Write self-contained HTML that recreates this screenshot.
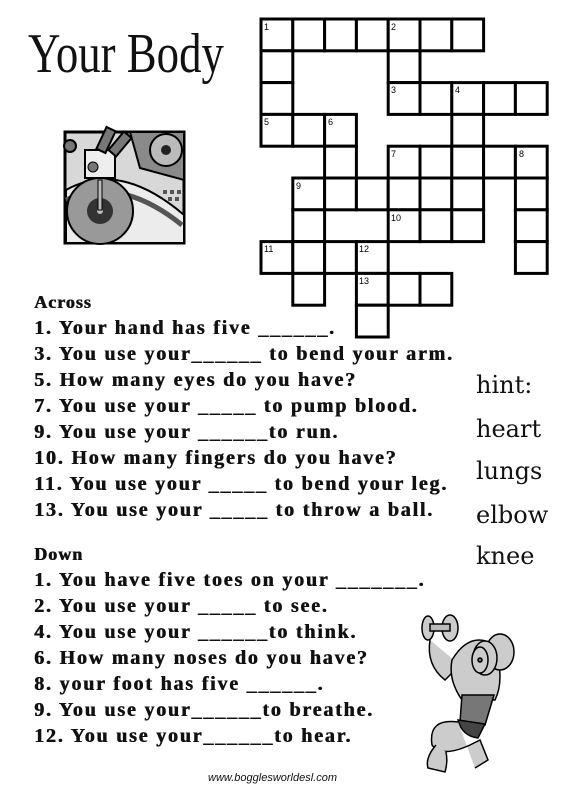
<!DOCTYPE html>
<html><head><meta charset="utf-8"><style>
html,body{margin:0;padding:0;background:#fff;}
body{width:576px;height:792px;position:relative;overflow:hidden;}
.t{position:absolute;left:34px;font-family:"Liberation Serif",serif;font-weight:bold;font-size:20px;letter-spacing:1.8px;white-space:nowrap;line-height:20px;color:#111;text-shadow:0.6px 0 0 #111;}
.h{position:absolute;font-family:"DejaVu Serif","Liberation Serif",serif;font-size:24px;color:#111;line-height:25px;}
</style></head><body>
<div style="position:absolute;left:28px;top:22px;font-family:'Liberation Serif',serif;font-size:56px;line-height:64px;color:#111;letter-spacing:0px;transform:scaleX(0.8);transform-origin:left top;">Your Body</div>

<svg style="position:absolute;left:0;top:0" width="576" height="792">
<g fill="#fff" stroke="#000" stroke-width="3">
<rect x="261" y="19" width="31.8" height="31.8"/><rect x="292.8" y="19" width="31.8" height="31.8"/><rect x="324.6" y="19" width="31.8" height="31.8"/><rect x="356.4" y="19" width="31.8" height="31.8"/><rect x="388.2" y="19" width="31.8" height="31.8"/><rect x="420" y="19" width="31.8" height="31.8"/><rect x="451.8" y="19" width="31.8" height="31.8"/>
<rect x="261" y="50.8" width="31.8" height="31.8"/><rect x="388.2" y="50.8" width="31.8" height="31.8"/>
<rect x="261" y="82.6" width="31.8" height="31.8"/><rect x="388.2" y="82.6" width="31.8" height="31.8"/><rect x="420" y="82.6" width="31.8" height="31.8"/><rect x="451.8" y="82.6" width="31.8" height="31.8"/><rect x="483.6" y="82.6" width="31.8" height="31.8"/><rect x="515.4" y="82.6" width="31.8" height="31.8"/>
<rect x="261" y="114.4" width="31.8" height="31.8"/><rect x="292.8" y="114.4" width="31.8" height="31.8"/><rect x="324.6" y="114.4" width="31.8" height="31.8"/><rect x="451.8" y="114.4" width="31.8" height="31.8"/>
<rect x="324.6" y="146.2" width="31.8" height="31.8"/><rect x="388.2" y="146.2" width="31.8" height="31.8"/><rect x="420" y="146.2" width="31.8" height="31.8"/><rect x="451.8" y="146.2" width="31.8" height="31.8"/><rect x="483.6" y="146.2" width="31.8" height="31.8"/><rect x="515.4" y="146.2" width="31.8" height="31.8"/>
<rect x="292.8" y="178" width="31.8" height="31.8"/><rect x="324.6" y="178" width="31.8" height="31.8"/><rect x="356.4" y="178" width="31.8" height="31.8"/><rect x="388.2" y="178" width="31.8" height="31.8"/><rect x="420" y="178" width="31.8" height="31.8"/><rect x="451.8" y="178" width="31.8" height="31.8"/><rect x="515.4" y="178" width="31.8" height="31.8"/>
<rect x="292.8" y="209.8" width="31.8" height="31.8"/><rect x="388.2" y="209.8" width="31.8" height="31.8"/><rect x="420" y="209.8" width="31.8" height="31.8"/><rect x="451.8" y="209.8" width="31.8" height="31.8"/><rect x="515.4" y="209.8" width="31.8" height="31.8"/>
<rect x="261" y="241.6" width="31.8" height="31.8"/><rect x="292.8" y="241.6" width="31.8" height="31.8"/><rect x="324.6" y="241.6" width="31.8" height="31.8"/><rect x="356.4" y="241.6" width="31.8" height="31.8"/><rect x="515.4" y="241.6" width="31.8" height="31.8"/>
<rect x="292.8" y="273.4" width="31.8" height="31.8"/><rect x="356.4" y="273.4" width="31.8" height="31.8"/><rect x="388.2" y="273.4" width="31.8" height="31.8"/><rect x="420" y="273.4" width="31.8" height="31.8"/>
<rect x="356.4" y="305.2" width="31.8" height="31.8"/>
</g>
<g font-family="Liberation Sans,sans-serif" font-size="9" fill="#000">
<text x="264" y="30">1</text><text x="391" y="30">2</text><text x="391" y="93">3</text><text x="455" y="93">4</text>
<text x="264" y="125">5</text><text x="328" y="125">6</text><text x="391" y="157">7</text><text x="519" y="157">8</text>
<text x="296" y="189">9</text><text x="391" y="221">10</text><text x="264" y="252">11</text><text x="359" y="252">12</text><text x="359" y="284">13</text>
</g>

<g>
<rect x="65" y="132" width="119" height="111" fill="#d8d8d8" stroke="#000" stroke-width="3"/>
<path d="M130 132 L184 132 L184 180 L140 168 Z" fill="#8a8a8a" stroke="#000" stroke-width="2"/>
<circle cx="166" cy="150" r="16" fill="#bbb" stroke="#000" stroke-width="2"/>
<circle cx="166" cy="150" r="5" fill="#222"/>
<path d="M66 190 Q120 160 184 215 L184 243 L66 243 Z" fill="#ececec" stroke="#000" stroke-width="2"/>
<path d="M66 200 Q120 175 182 225" fill="none" stroke="#555" stroke-width="5"/>
<circle cx="100" cy="211" r="33" fill="#999" stroke="#000" stroke-width="2"/>
<circle cx="100" cy="211" r="13" fill="#333"/>
<circle cx="100" cy="211" r="3" fill="#bbb"/>
<rect x="98" y="180" width="4" height="30" fill="#bbb" stroke="#000"/>
<rect x="85" y="150" width="30" height="28" fill="#eee" stroke="#000" stroke-width="2"/>
<rect x="101" y="128" width="10" height="24" fill="#777" stroke="#000" stroke-width="2" transform="rotate(25 106 140)"/>
<rect x="115" y="132" width="10" height="24" fill="#777" stroke="#000" stroke-width="2" transform="rotate(40 120 144)"/>
<circle cx="70" cy="146" r="6" fill="#777" stroke="#000" stroke-width="2"/>
<circle cx="93" cy="167" r="5" fill="#777" stroke="#000"/>
<g fill="#555"><rect x="163" y="190" width="4" height="4"/><rect x="170" y="190" width="4" height="4"/><rect x="177" y="190" width="4" height="4"/><rect x="168" y="197" width="4" height="4"/><rect x="175" y="197" width="4" height="4"/></g>
</g>

<g stroke="#000" stroke-width="1.5">
<path d="M430 640 Q426 665 445 680 L460 665" fill="#ccc"/>
<ellipse cx="428" cy="628" rx="6" ry="12" fill="#ccc"/>
<ellipse cx="450" cy="628" rx="8" ry="13" fill="#ccc"/>
<rect x="430" y="624" width="20" height="7" fill="#bbb"/>
<path d="M452 660 Q470 630 495 645 Q505 680 495 700 L462 700 Q448 680 452 660 Z" fill="#ccc"/>
<ellipse cx="500" cy="652" rx="14" ry="18" fill="#ccc"/>
<ellipse cx="485" cy="658" rx="12" ry="17" fill="#ccc"/>
<ellipse cx="480" cy="660" rx="8" ry="13" fill="#ccc"/>
<circle cx="480" cy="660" r="2" fill="#777"/>
<path d="M462 695 L494 695 L485 725 L460 722 Z" fill="#777"/>
<path d="M458 720 L485 724 L478 738 Q462 736 458 720 Z" fill="#444"/>
<path d="M458 722 Q428 718 432 745 Q442 758 470 745 L480 740 L488 760 L475 768" fill="#ccc"/>
<path d="M436 745 Q425 758 428 768 L445 772 Q448 762 446 752" fill="#ccc"/>
</g>
</svg>

<div class="t" style="top:292px;font-size:18px;letter-spacing:1px">Across</div>
<div class="t" style="top:318px">1. Your hand has five ______.</div>
<div class="t" style="top:344px">3. You use your______ to bend your arm.</div>
<div class="t" style="top:370px">5. How many eyes do you have?</div>
<div class="t" style="top:396px">7. You use your _____ to pump blood.</div>
<div class="t" style="top:422px">9. You use your ______to run.</div>
<div class="t" style="top:448px">10. How many fingers do you have?</div>
<div class="t" style="top:474px">11. You use your _____ to bend your leg.</div>
<div class="t" style="top:500px">13. You use your _____ to throw a ball.</div>

<div class="t" style="top:544px;font-size:18px;letter-spacing:1px">Down</div>
<div class="t" style="top:570px">1. You have five toes on your _______.</div>
<div class="t" style="top:596px">2. You use your _____ to see.</div>
<div class="t" style="top:622px">4. You use your ______to think.</div>
<div class="t" style="top:648px">6. How many noses do you have?</div>
<div class="t" style="top:674px">8. your foot has five ______.</div>
<div class="t" style="top:700px">9. You use your______to breathe.</div>
<div class="t" style="top:726px">12. You use your______to hear.</div>

<div class="h" style="left:476px;top:373px">hint:</div>
<div class="h" style="left:476px;top:417px">heart</div>
<div class="h" style="left:476px;top:459px">lungs</div>
<div class="h" style="left:476px;top:503px">elbow</div>
<div class="h" style="left:476px;top:544px">knee</div>

<div style="position:absolute;left:208px;top:772px;font-family:'Liberation Sans',sans-serif;font-style:italic;font-size:11px;color:#111;">www.bogglesworldesl.com</div>
</body></html>
